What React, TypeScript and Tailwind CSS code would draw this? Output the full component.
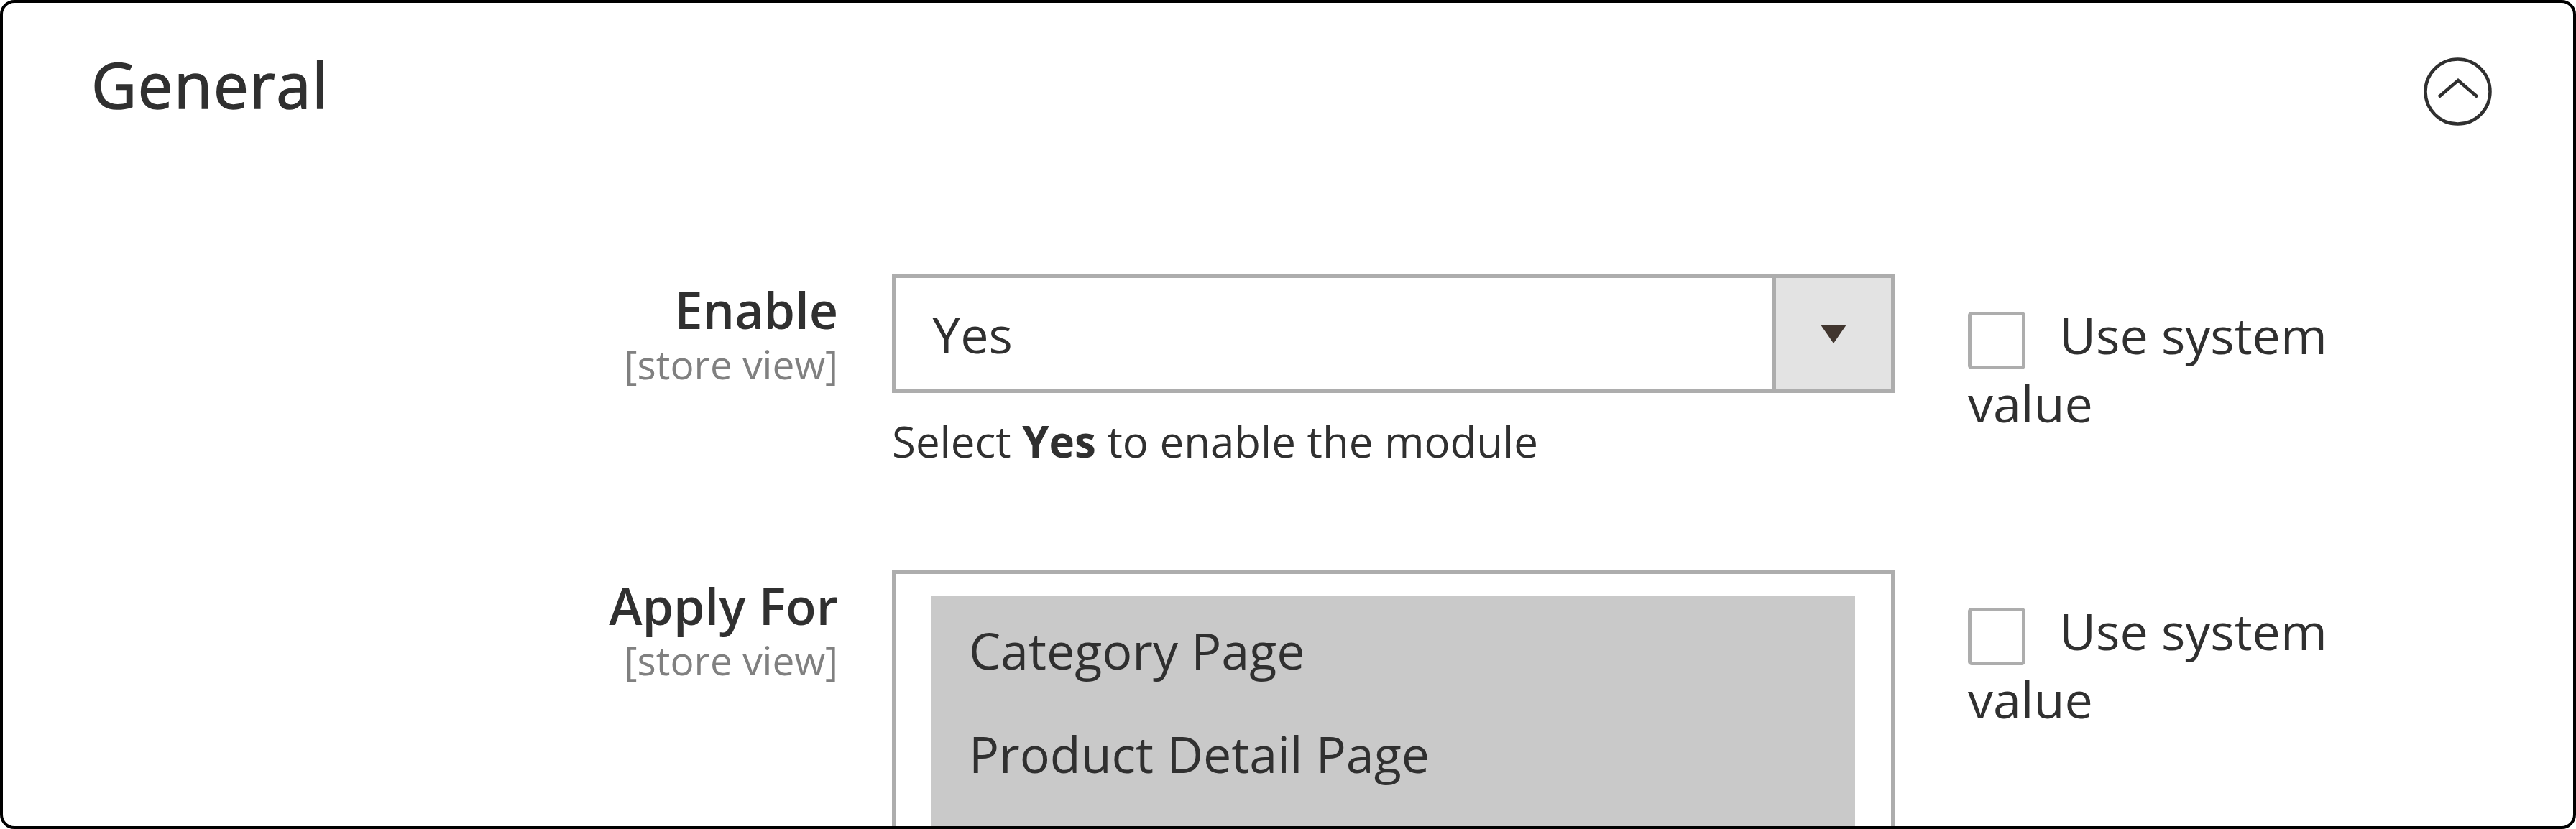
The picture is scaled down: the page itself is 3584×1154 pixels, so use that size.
import React from 'react';

type FieldProps = {
  label: string;
  children: React.ReactNode;
};

function UseSystemValue() {
  return (
    <label className="block w-[560px] pt-[37px] text-[70px] leading-[95px]">
      <span className="inline-block w-[80px] h-[80px] border-[5px] border-[#adadad] rounded-[5px] bg-white align-middle mr-[47px]" />
      Use system value
    </label>
  );
}

function Field({ label, children }: FieldProps) {
  return (
    <div className="flex items-start">
      <div className="w-[1162px] shrink-0 text-right pt-[12px]">
        <div className="text-[70px] leading-[74px] font-semibold">{label}</div>
        <div className="mt-[12px] text-[55px] leading-[54px] text-[#808080]">[store view]</div>
      </div>
      <div className="ml-[75px] w-[1395px] shrink-0">{children}</div>
      <div className="ml-[102px]">
        <UseSystemValue />
      </div>
    </div>
  );
}

export default function App() {
  return (
    <div className="w-[3584px] h-[1154px] bg-white font-['Open_Sans',sans-serif] text-[#303030]">
      <div className="h-full border-4 border-black rounded-[20px] overflow-hidden">
        <div className="flex items-start justify-between pl-[123px] pr-[113px] pt-[71px]">
          <h2 className="text-[87px] leading-[85px] font-normal tracking-[1.5px] [-webkit-text-stroke:1.5px_#303030]">General</h2>
          <button className="mt-[5px] w-[95px] h-[95px]" aria-label="Collapse">
            <svg viewBox="0 0 95 95" className="w-[95px] h-[95px]" fill="none" stroke="#303030">
              <circle cx="47.5" cy="47.5" r="45" strokeWidth="4.5" />
              <polyline points="21,55 48,32 75,55" strokeWidth="4.5" strokeLinejoin="miter" />
            </svg>
          </button>
        </div>

        <div className="mt-[207px] flex flex-col gap-[138px]">
          <Field label="Enable">
            <div className="h-[165px] border-[5px] border-[#adadad] bg-white flex">
              <div className="flex-1 flex items-center pl-[51px] text-[70px] leading-[98px]">Yes</div>
              <div className="w-[165px] border-l-[5px] border-[#adadad] bg-[#e3e3e3] flex items-center justify-center">
                <svg viewBox="0 0 36 26" className="w-[36px] h-[26px]">
                  <polygon points="0,0 36,0 18,26" fill="#41362f" />
                </svg>
              </div>
            </div>
            <p className="mt-[25px] text-[60px] leading-[84px]">
              Select <b className="font-bold">Yes</b> to enable the module
            </p>
          </Field>

          <Field label="Apply For">
            <div className="h-[600px] border-[5px] border-[#adadad] bg-white px-[50px] pt-[30px]">
              <div className="bg-[#c9c9c9] h-full text-[70px] leading-[98px]">
                <div className="pt-[27px] pb-[23px] px-[52px]">Category Page</div>
                <div className="py-[23px] px-[52px]">Product Detail Page</div>
              </div>
            </div>
          </Field>
        </div>
      </div>
    </div>
  );
}
